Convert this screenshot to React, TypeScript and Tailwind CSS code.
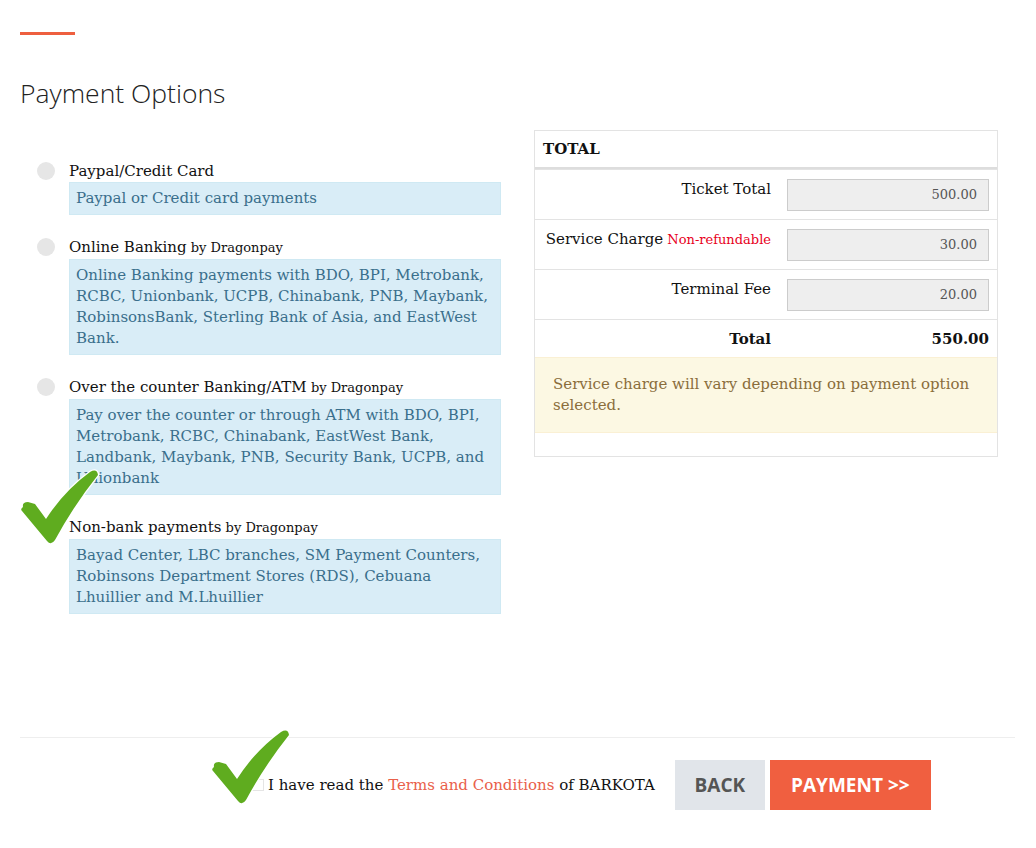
import React from 'react';

const serif = "font-['DejaVu_Serif','Liberation_Serif',serif]";
const sans = "font-['Open_Sans','Liberation_Sans',sans-serif]";

interface Option {
  title: string;
  by?: string;
  text: string;
}

const options: Option[] = [
  { title: 'Paypal/Credit Card', text: 'Paypal or Credit card payments' },
  {
    title: 'Online Banking',
    by: 'by Dragonpay',
    text: 'Online Banking payments with BDO, BPI, Metrobank, RCBC, Unionbank, UCPB, Chinabank, PNB, Maybank, RobinsonsBank, Sterling Bank of Asia, and EastWest Bank.',
  },
  {
    title: 'Over the counter Banking/ATM',
    by: 'by Dragonpay',
    text: 'Pay over the counter or through ATM with BDO, BPI, Metrobank, RCBC, Chinabank, EastWest Bank, Landbank, Maybank, PNB, Security Bank, UCPB, and Unionbank',
  },
  {
    title: 'Non-bank payments',
    by: 'by Dragonpay',
    text: 'Bayad Center, LBC branches, SM Payment Counters, Robinsons Department Stores (RDS), Cebuana Lhuillier and M.Lhuillier',
  },
];

function Check() {
  return (
    <svg width="90" height="90" viewBox="0 0 90 90">
      <path
        d="M9 44 Q8 39 14 39 L21 41 L32 56 Q50 28 76 9 Q83 5 84 12 Q60 42 41 77 Q37 83 33 78 L8 48 Q6 46 9 44 Z"
        fill="#5fac1f"
        stroke="#ffffff"
        strokeWidth="2.5"
        strokeLinejoin="round"
        paintOrder="stroke"
      />
    </svg>
  );
}

function FeeRow({ label, extra, value }: { label: string; extra?: string; value: string }) {
  return (
    <div className="grid grid-cols-[244px_1fr] border-t border-[#e3e3e3]">
      <div className="pr-[8px] pt-[8px] text-right text-[15px] leading-[22px] text-[#111]">
        {label}
        {extra && <span className="text-[13px] text-[#e8001c]"> {extra}</span>}
      </div>
      <div className="px-[8px] pt-[9px] pb-[8px]">
        <div className="h-[32px] border border-[#cccccc] bg-[#eeeeee] pr-[11px] text-right text-[13px] leading-[30px] text-[#555]">
          {value}
        </div>
      </div>
    </div>
  );
}

export default function App() {
  return (
    <div className={`${serif} min-h-[848px] bg-white pl-[20px] pr-[21px] pt-[32px] text-[#111]`}>
      <div className="h-[3px] w-[55px] bg-[#ee5f3f]" />
      <h2 className={`${sans} mt-[40px] text-[26.5px] font-light leading-[36px] text-[#222]`}>
        Payment Options
      </h2>

      <div className="mt-[19px] flex gap-[33px]">
        <div className="relative w-[481px] pt-[30px]">
          {options.map((o, i) => (
            <div key={o.title} className={'flex ' + (i > 0 ? 'mt-[21px]' : '')}>
              <div className="w-[49px] pl-[17px] pt-[2px]">
                <span className="block h-[18px] w-[18px] rounded-full bg-[#e6e6e6]" />
              </div>
              <div className="w-[432px]">
                <div className="text-[15px] leading-[22px]">
                  {o.title}
                  {o.by && <span className="text-[13px]"> {o.by}</span>}
                </div>
                <div className="border border-[#cfe9f3] bg-[#d9edf7] px-[6px] py-[5px] text-[15px] leading-[21px] text-[#3a6f8c]">
                  {o.text}
                </div>
              </div>
            </div>
          ))}
          <div className="absolute left-[-6px] top-[333px]">
            <Check />
          </div>
        </div>

        <div className="h-[327px] w-[464px] border border-[#e3e3e3]">
          <div className="border-b-2 border-[#dddddd] px-[8px] py-[7px] text-[15px] font-bold leading-[22px]">
            TOTAL
          </div>
          <FeeRow label="Ticket Total" value="500.00" />
          <FeeRow label="Service Charge" extra="Non-refundable" value="30.00" />
          <FeeRow label="Terminal Fee" value="20.00" />
          <div className="grid grid-cols-[244px_1fr] border-t border-[#e3e3e3] text-[15px] font-bold leading-[22px]">
            <div className="pr-[8px] pt-[8px] pb-[7px] text-right">Total</div>
            <div className="pr-[8px] pt-[8px] text-right">550.00</div>
          </div>
          <div className="border-y border-[#faf0d4] bg-[#fcf8e3] px-[18px] py-[16px] text-[15px] leading-[21px] text-[#8a6d3b]">
            Service charge will vary depending on payment option selected.
          </div>
        </div>
      </div>

      <div className="mt-[123px] border-t border-[#eeeeee]">
        <div className="relative flex items-center pt-[22px]">
          <div className="ml-[232px] mr-[4px] h-[12px] w-[12px] border border-[#e5e5e5]" />
          <span className="text-[15px] leading-[22px]">
            I have read the <span className="text-[#e9604a]">Terms and Conditions</span> of BARKOTA
          </span>
          <button className={`${sans} ml-[20px] h-[50px] w-[90px] bg-[#e1e5ea] text-[19px] font-bold text-[#555]`}>
            BACK
          </button>
          <button className={`${sans} ml-[5px] h-[50px] w-[161px] bg-[#f05f40] text-[19px] font-bold text-white`}>
            PAYMENT &gt;&gt;
          </button>
          <div className="absolute left-[185px] top-[-15px]">
            <Check />
          </div>
        </div>
      </div>
    </div>
  );
}
